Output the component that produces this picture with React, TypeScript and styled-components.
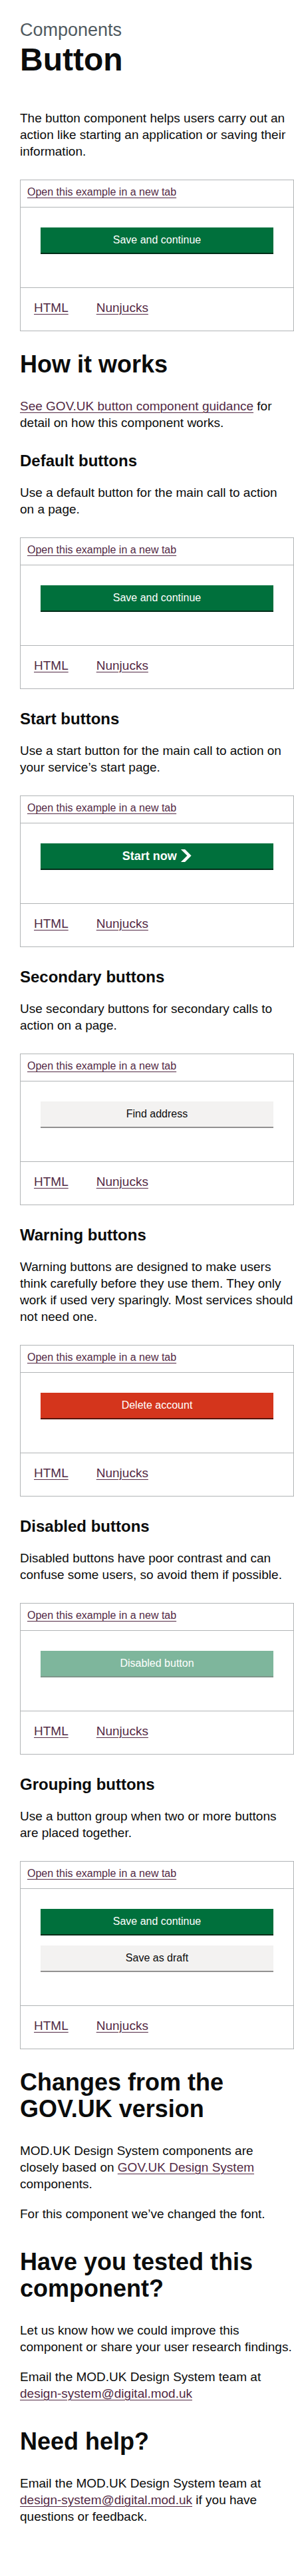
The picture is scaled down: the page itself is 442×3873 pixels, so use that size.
import styled, { createGlobalStyle } from "styled-components";

const textColour = '#0b0c0c';
const linkColour = '#532a45';
const borderColour = '#b1b4b6';

const GlobalStyle = createGlobalStyle`
    * {
        box-sizing: border-box;
    }

    body {
        margin: 0;
        background: #ffffff;
        color: ${ textColour };
        font-family: "Liberation Sans", Arial, sans-serif;
        -webkit-font-smoothing: antialiased;
    }
`;

const Page = styled.main`
    width: 100%;
    padding: 30px 0 50px 30px;
`;

const Caption = styled.span`
    display: block;
    margin: 0 0 5px;
    font-size: 27px;
    line-height: 30px;
    color: #505a5f;
`;

const PageTitle = styled.h1`
    margin: 0 0 50px;
    font-size: 48px;
    line-height: 50px;
    font-weight: 700;
`;

const SectionTitle = styled.h2<{ $top?: number }>`
    margin: ${ p => p.$top ?? 30 }px 0 30px;
    font-size: 36px;
    line-height: 40px;
    font-weight: 700;
`;

const SubTitle = styled.h3`
    margin: 30px 0 20px;
    font-size: 24px;
    line-height: 30px;
    font-weight: 700;
`;

const Body = styled.p`
    margin: 0 0 20px;
    font-size: 19px;
    line-height: 25px;
`;

const Link = styled.a`
    color: ${ linkColour };
    text-decoration: underline;
    text-decoration-thickness: 1px;
    text-underline-offset: 0.1578em;
`;

const Example = styled.div`
    margin: 30px 0;
    border: 1px solid ${ borderColour };
`;

const ExampleHeader = styled.div`
    padding: 8px 10px 12px;
    font-size: 16px;
    line-height: 20px;
    border-bottom: 1px solid ${ borderColour };
`;

const ExampleFrame = styled.div`
    padding: 30px 30px 30px;
    border-bottom: 1px solid ${ borderColour };
`;

const ButtonGroup = styled.div`
    display: flex;
    flex-direction: column;
    margin-bottom: 5px;

    & > button {
        margin-bottom: 17px;
    }
`;

type Variant = 'primary' | 'secondary' | 'warning';

const colours: Record<Variant, { bg: string; fg: string; shadow: string }> = {
    primary: { bg: '#00703c', fg: '#ffffff', shadow: '#002d18' },
    secondary: { bg: '#f3f2f1', fg: '#0b0c0c', shadow: '#929191' },
    warning: { bg: '#d4351c', fg: '#ffffff', shadow: '#55150b' },
};

const Button = styled.button<{ $variant?: Variant; $start?: boolean }>`
    display: flex;
    align-items: center;
    justify-content: center;
    width: 100%;
    margin: 0 0 22px;
    padding: 7px 10px 8px;
    border: 2px solid transparent;
    border-radius: 0;
    background-color: ${ p => colours[p.$variant ?? 'primary'].bg };
    color: ${ p => colours[p.$variant ?? 'primary'].fg };
    box-shadow: 0 2px 0 ${ p => colours[p.$variant ?? 'primary'].shadow };
    font-family: "Liberation Sans", Arial, sans-serif;
    font-size: ${ p => p.$start ? '18px' : '16px' };
    font-weight: ${ p => p.$start ? 700 : 400 };
    line-height: ${ p => p.$start ? 1 : '19px' };
    text-align: center;
    cursor: pointer;

    &:disabled {
        opacity: 0.5;
        cursor: not-allowed;
    }
`;

const StartIcon = styled.svg`
    flex-shrink: 0;
    margin-left: 5px;
`;

const TabList = styled.div`
    display: flex;
    gap: 2px;
    padding: 17px 0 22px;
    font-size: 19px;
    line-height: 25px;
`;

const Tab = styled.span`
    padding: 0 20px;
`;

function ExampleBox({ children }: { children: React.ReactNode }) {
    return (
        <Example>
            <ExampleHeader>
                <Link href="#">Open this example in a new tab</Link>
            </ExampleHeader>
            <ExampleFrame>{ children }</ExampleFrame>
            <TabList>
                <Tab><Link href="#">HTML</Link></Tab>
                <Tab><Link href="#">Nunjucks</Link></Tab>
            </TabList>
        </Example>
    );
}

function App() {
    return (
        <>
            <GlobalStyle />
            <Page>
                <Caption>Components</Caption>
                <PageTitle>Button</PageTitle>
                <Body>
                    The button component helps users carry out an action like starting an application or saving their information.
                </Body>
                <ExampleBox>
                    <Button>Save and continue</Button>
                </ExampleBox>

                <SectionTitle>How it works</SectionTitle>
                <Body>
                    <Link href="#">See GOV.UK button component guidance</Link> for detail on how this component works.
                </Body>

                <SubTitle>Default buttons</SubTitle>
                <Body>Use a default button for the main call to action on a page.</Body>
                <ExampleBox>
                    <Button>Save and continue</Button>
                </ExampleBox>

                <SubTitle>Start buttons</SubTitle>
                <Body>Use a start button for the main call to action on your service’s start page.</Body>
                <ExampleBox>
                    <Button $start>
                        Start now
                        <StartIcon width="17.5" height="19" viewBox="0 0 33 40" aria-hidden="true">
                            <path fill="currentColor" d="M0 0h13l20 20-20 20H0l20-20z" />
                        </StartIcon>
                    </Button>
                </ExampleBox>

                <SubTitle>Secondary buttons</SubTitle>
                <Body>Use secondary buttons for secondary calls to action on a page.</Body>
                <ExampleBox>
                    <Button $variant="secondary">Find address</Button>
                </ExampleBox>

                <SubTitle>Warning buttons</SubTitle>
                <Body>
                    Warning buttons are designed to make users think carefully before they use them. They only work if used very sparingly. Most services should not need one.
                </Body>
                <ExampleBox>
                    <Button $variant="warning">Delete account</Button>
                </ExampleBox>

                <SubTitle>Disabled buttons</SubTitle>
                <Body>Disabled buttons have poor contrast and can confuse some users, so avoid them if possible.</Body>
                <ExampleBox>
                    <Button disabled>Disabled button</Button>
                </ExampleBox>

                <SubTitle>Grouping buttons</SubTitle>
                <Body>Use a button group when two or more buttons are placed together.</Body>
                <ExampleBox>
                    <ButtonGroup>
                        <Button>Save and continue</Button>
                        <Button $variant="secondary">Save as draft</Button>
                    </ButtonGroup>
                </ExampleBox>

                <SectionTitle>Changes from the GOV.UK version</SectionTitle>
                <Body>
                    MOD.UK Design System components are closely based on <Link href="#">GOV.UK Design System</Link> components.
                </Body>
                <Body>For this component we’ve changed the font.</Body>

                <SectionTitle $top={ 40 }>Have you tested this component?</SectionTitle>
                <Body>Let us know how we could improve this component or share your user research findings.</Body>
                <Body>
                    Email the MOD.UK Design System team at <Link href="#">design-system@digital.mod.uk</Link>
                </Body>

                <SectionTitle $top={ 40 }>Need help?</SectionTitle>
                <Body>
                    Email the MOD.UK Design System team at <Link href="#">design-system@digital.mod.uk</Link> if you have questions or feedback.
                </Body>
            </Page>
        </>
    );
};

export default App;
